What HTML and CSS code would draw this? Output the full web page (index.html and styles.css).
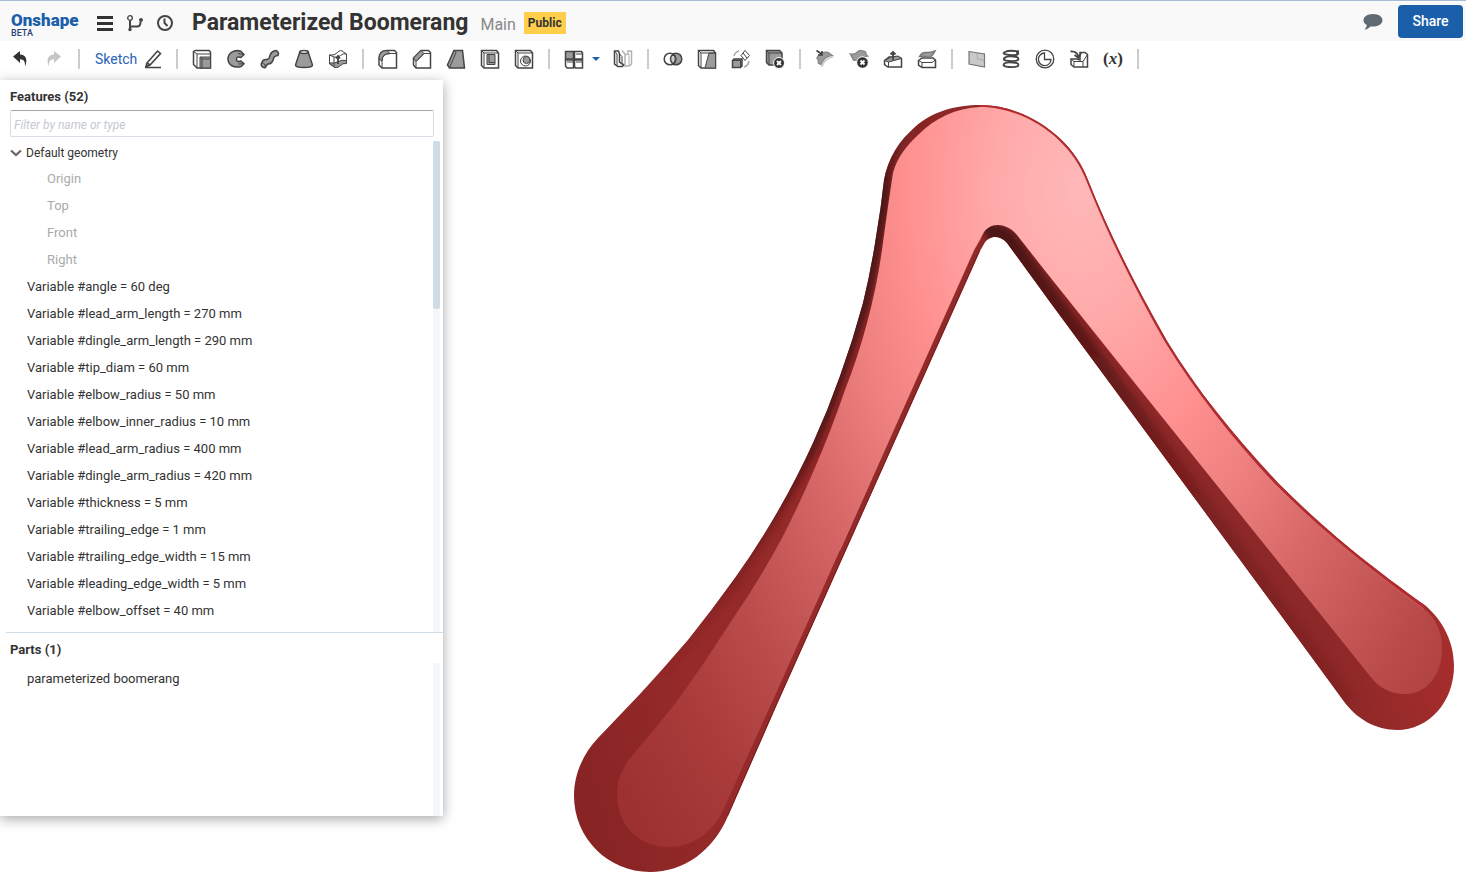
FILE: index.html
```
<!DOCTYPE html>
<html lang="en">
<head>
<meta charset="utf-8">
<title>Parameterized Boomerang</title>
<link rel="stylesheet" href="styles.css">
</head>
<body>
<header class="topbar">
  <a class="logo" href="#"><span class="logo-name">Onshape</span><span class="logo-tag">BETA</span></a>
  <nav class="top-nav">
    <button class="nav-btn" aria-label="Menu"><svg viewBox="0 0 20 20"><path d="M2 4.500h16M2 10.500h16M2 16.500h16" stroke="#333" stroke-width="3"/></svg></button>
    <button class="nav-btn" aria-label="Versions"><svg viewBox="0 0 20 20" class="ln"><circle cx="5" cy="5" r="2.300" stroke-width="1.300"/><path d="M5 7.500V18M5 13.500h7q3.500 0 3.500-4.500" stroke-width="2"/><circle cx="5" cy="16.500" r="1" stroke-width="1.500"/><circle cx="16" cy="7" r="1" stroke-width="2"/></svg></button>
    <button class="nav-btn" aria-label="History"><svg viewBox="0 0 20 20" class="ln"><circle cx="10" cy="10" r="7" stroke-width="2"/><path d="M9.500 5.500V10l3 3" stroke-width="2"/></svg></button>
  </nav>
  <div class="doc">
    <h1 class="doc-title">Parameterized Boomerang</h1>
    <span class="doc-branch">Main</span>
    <span class="badge">Public</span>
  </div>
  <button class="chat-btn" aria-label="Comments"><svg viewBox="0 0 20 20"><path d="M10 3c5.500 0 9.500 2.800 9.500 6.300s-4 6.300-9.500 6.300q-1.200 0-2.400-.2Q5 18 1.500 18.800q2.300-2.300 2.300-4.700Q.5 12.300.5 9.300C.5 5.800 4.500 3 10 3z" fill="#5f6a73"/></svg></button>
  <button class="share-btn">Share</button>
</header>

<div class="toolbar" role="toolbar">
  <button class="tool" aria-label="Undo"><svg viewBox="0 0 20 20"><path d="M3 7.500 10 2v3.500c6 .3 8 5 5 12 .2-5-1-7-5-7.200V14z" fill="#333"/></svg></button>
  <button class="tool" aria-label="Redo"><svg viewBox="0 0 20 20"><path d="M17 7.500 10 2v3.500c-6 .3-8 5-5 12-.2-5 1-7 5-7.200V14z" fill="#c6c6c6"/></svg></button>
  <span class="sep"></span>
  <button class="tool sketch">Sketch <svg viewBox="0 0 20 20" class="ln"><path d="M4 14 14.500 2l3 2.500L7 16l-4 1.500zM4 14l3 2M2 18.500h16" stroke-width="1.600"/></svg></button>
  <span class="sep"></span>
  <button class="tool" aria-label="Extrude"><svg viewBox="0 0 20 20" class="ln"><path d="M1.500 2.500 3 1.500h14l1.500 1.500v16H5L1.500 15.500z"/><path d="M1.500 2.500 5 5h13M5 5v14" class="th"/><path d="M8 8h10.500v11H8z" class="gr th"/><path d="M8 8l2 2h8.500M10 10v9" class="th"/></svg></button>
  <button class="tool" aria-label="Revolve"><svg viewBox="0 0 20 20" class="ln"><path d="M14.500 2C8 .5 2 4 2 10s6 9.500 13 7.500l3-2.800-3-2.700q-4.500 1.500-4.500-1.800t4.500-1.700l3-3z" class="gr"/><path d="m12 4.500 6 1M12.500 15l5.500-.3" class="th"/></svg></button>
  <button class="tool" aria-label="Sweep"><svg viewBox="0 0 20 20" class="ln"><path d="M2 13q1-3 5-2.500 2.500-.5 3-4Q11 2 16.500 1.500q3 2 1.500 5-4 .5-4.500 3-1 5.500-5.500 5.500-2 1-2.500 3.500-2 .5-3.500-1T2 13z" class="gr"/><path d="M2 14q3-.5 3.500 4.500" class="th"/></svg></button>
  <button class="tool" aria-label="Loft"><svg viewBox="0 0 20 20" class="ln"><path d="M6 2.500 1.500 16q0 2.500 8.500 2.500t8.500-2.500L14 2.500z" class="gr"/><ellipse cx="10" cy="3" rx="4" ry="1.500" class="wf"/></svg></button>
  <button class="tool" aria-label="Thicken"><svg viewBox="0 0 20 20" class="ln"><path d="M1.500 6q5 1 8-2.500t6-.5l3 2v8q-3-1-5 2t-7 3l-5-3z" class="th wf"/><path d="M1.500 14q6 .5 9-1.500t8-1v3q-4-.5-6 2t-6 2z" class="gr th"/><path d="M1.500 6 6 8q4 1 6.500-1.500T18.500 5M6 8v10" class="th"/><path d="M10 15V7M8 9.500 10 7l2 2.500" stroke-width="1.800"/></svg></button>
  <span class="sep"></span>
  <button class="tool" aria-label="Fillet"><svg viewBox="0 0 20 20" class="ln"><path d="M1 10Q1 1.500 9 1.500h7.500l2 2V19H4l-3-3z" class="wf"/><path d="M1 10Q1 1.500 9 1.500l3 3Q4 4.500 4 12z" class="gr th"/><path d="M4 19v-7q0-7.500 8-7.500h6" class="th"/></svg></button>
  <button class="tool" aria-label="Chamfer"><svg viewBox="0 0 20 20" class="ln"><path d="M1.500 9 9 1.500h7.500l2 2V19H4l-2.500-3z" class="wf"/><path d="M1.500 9 9 1.500l3 3-8 8z" class="gr th"/><path d="M4 19v-6.500l8-8h6" class="th"/></svg></button>
  <button class="tool" aria-label="Draft"><svg viewBox="0 0 20 20" class="ln"><path d="M8 1.500h8.500l2 17.500H3.500l-2-3z" class="gr"/><path d="m8 1.500 2 2L3.500 19" class="th"/></svg></button>
  <button class="tool" aria-label="Shell"><svg viewBox="0 0 20 20" class="ln"><path d="M1.500 1.500h15l2 2.500v15H4l-2.500-2.500z" class="wf"/><path d="M1.500 1.500 4 4v15M4 4h14" class="th"/><path d="M7 5.500v10h8v-10z" class="gr th"/><path d="M9 5.500v8h6" class="th"/></svg></button>
  <button class="tool" aria-label="Hole"><svg viewBox="0 0 20 20" class="ln"><path d="M1.500 1.500h15l2 2.500v15H4l-2.500-2.500z" class="wf"/><path d="M1.500 1.500 4 4v15M4 4h14" class="th"/><circle cx="11.500" cy="12" r="5" class="wf th"/><circle cx="12.500" cy="11" r="3.500" class="gr th"/></svg></button>
  <span class="sep"></span>
  <button class="tool" aria-label="Linear pattern"><svg viewBox="0 0 20 20" class="ln"><rect x="1.500" y="2.500" width="8" height="7.500" class="gr"/><path d="M10.500 2.500h7l1 1.500v6h-8zM1.500 11h8v8H3l-1.500-2zM10.500 11h8v8h-7l-1-1.500z" class="wf"/><path d="M3 13h6M12 13h6M12 5h6" class="th"/></svg></button>
  <button class="caret" aria-label="More patterns"><svg viewBox="0 0 8 4"><path d="M0 0h8L4 4z" fill="#1b5faa"/></svg></button>
  <button class="tool" aria-label="Mirror"><svg viewBox="0 0 20 20" class="ln"><g class="soft"><path d="M9 1.500 12 5v12l-3-3M12 6l3-1V2h3.500v13l-2 2H12"/><path d="M16 5v12" class="th"/></g><path d="M1.500 2h4l1 3v8l4 3-1 1.500H5L1.500 15z" class="wf"/><path d="M1.500 2 4 5v12M6.500 5 9 7.500V14" class="th"/></svg></button>
  <span class="sep"></span>
  <button class="tool" aria-label="Boolean"><svg viewBox="0 0 20 20" class="ln"><circle cx="13" cy="10" r="5.800" class="gr"/><circle cx="7" cy="10" r="5.800" class="wf"/><path d="M10 5q-2.500 2-2.500 5t2.500 5q2.500-2 2.500-5T10 5z" fill="#ccc"/></svg></button>
  <button class="tool" aria-label="Split"><svg viewBox="0 0 20 20" class="ln"><path d="M1.500 1.500h15l2 2.500v15H4l-2.500-2.500z" class="wf"/><path d="M12 4h6.500v15H8z" class="gr th"/><path d="M1.500 1.500 4 4v15M4 4h14" class="th"/></svg></button>
  <button class="tool" aria-label="Transform"><svg viewBox="0 0 20 20" class="ln"><path d="M1.500 11.500 3 10h8v7l-1.500 1.500h-8z" class="gr"/><path d="M1.500 11.500h8v7M9.500 11.500 11 10" class="th"/><path d="m14 1.500 4.500 5-4.500 5-4-5zM12 4l4 5" class="th wf"/><path d="M3 7q1-4 5-5M18 12q-1 5-5 6" stroke="#aaa"/></svg></button>
  <button class="tool" aria-label="Delete part"><svg viewBox="0 0 20 20" class="ln"><path d="M1.500 1.500h13L17 4v12H4l-2.500-2.500z" class="gr"/><path d="M1.500 1.500 4 4v12M4 4h13" class="th"/><circle cx="14" cy="14" r="5.500" fill="#333" stroke="#fff" stroke-width="1"/><path d="m12 12 4 4m0-4-4 4" stroke="#fff" stroke-width="1.800"/></svg></button>
  <span class="sep"></span>
  <button class="tool" aria-label="Modify fillet"><svg viewBox="0 0 20 20" class="ln"><path d="M2 9q4-6.500 11-5.500l4 3Q9 7 6 15.500L3.500 14Q4 11 2 9z" class="gr" stroke="#888"/><path d="M19 8.500Q11 9 7.500 18l-2-.5Q9 9 17 7z" fill="#ccc" stroke="none"/><path d="M1.500 1.500 6.500 5M7 2v4H3" stroke-width="1.700"/></svg></button>
  <button class="tool" aria-label="Delete face"><svg viewBox="0 0 20 20" class="ln"><path d="M1.500 5Q6 6 8.500 3t8 0q.5 3 2 4-5 1-7 3t-7 1z" class="gr" stroke="#888"/><circle cx="13.500" cy="13.500" r="5.800" fill="#333" stroke="#fff" stroke-width="1"/><path d="m11.500 11.500 4 4m0-4-4 4" stroke="#fff" stroke-width="1.800"/></svg></button>
  <button class="tool" aria-label="Move face"><svg viewBox="0 0 20 20" class="ln"><path d="M1.500 11.500 6 8h9.500l3 1.500V18H5l-3.500-2.500z" class="wf"/><path d="m1.500 11.500 4 1.500L18.500 9.500 15 7 8 8z" class="gr th"/><path d="M5.500 13v5" class="th"/><path d="M10 11V3M7.500 5.500 10 3l2.500 2.500" stroke-width="1.800"/></svg></button>
  <button class="tool" aria-label="Replace face"><svg viewBox="0 0 20 20" class="ln"><path d="M1.500 11.500 5 9h11l2.500 2v7.500H5l-3.500-2.500z" class="wf"/><path d="m1.500 11.500 3.500 2h10l3.500-2.500M5 13.500v5" class="th"/><path d="M2.500 7.500Q5 3 9 3.500T18 2q-2 4-4 5.500T8 7.500z" fill="#9b9b9b" stroke="#777"/></svg></button>
  <span class="sep"></span>
  <button class="tool" aria-label="Plane"><svg viewBox="0 0 20 20" class="ln"><path d="m2 2.500 15.500 2.500v13L2 15z" fill="#c9c9c9" stroke="#777" stroke-width="1.200"/><path d="m10 4 .5 6 7 1.500" stroke="#aaa" stroke-width="1"/></svg></button>
  <button class="tool" aria-label="Helix"><svg viewBox="0 0 20 20" class="ln"><path d="M18 2.500Q8 .8 4 3t4 3 9-1q1-1.500-2-1.500M16 8Q6 6.500 3.500 9T8 12t9-1q1-2-1-3M16 14Q5 12.500 3 15t5 3 9-1q1-2-1-3" stroke-width="1.900"/></svg></button>
  <button class="tool" aria-label="Section view"><svg viewBox="0 0 20 20" class="ln"><circle cx="10" cy="10" r="8.800" stroke-width="1.300"/><path d="M9.500 4v6.500H16A6.300 6.300 0 1 1 9.500 4z" stroke-width="1.300"/></svg></button>
  <button class="tool" aria-label="Import"><svg viewBox="0 0 20 20" class="ln"><path d="M2 10h6l3 1V3.500h5l2.500 2V18H5l-3-2.500z" class="wf"/><path d="m2 10 3 2.500h9l4.500-7M5 12.500V18M14 12.500V18" class="th"/><path d="M1.500 2.500Q8 2 9.500 8M5.500 6l4 3L12 4" stroke-width="1.800"/></svg></button>
  <button class="tool variable">(<i>x</i>)</button>
  <span class="sep"></span>
</div>

<main class="workspace">
  <svg class="canvas" viewBox="0 80 1466 803" role="img" aria-label="Boomerang model">
    <defs>
      <radialGradient id="face" gradientUnits="userSpaceOnUse" cx="0" cy="0" r="1" gradientTransform="translate(1080 190) scale(595 945)">
        <stop offset="0" stop-color="#ffb8b8"/><stop offset=".14" stop-color="#ffaaaa"/><stop offset=".29" stop-color="#ff9090"/><stop offset=".4" stop-color="#ee8080"/><stop offset=".53" stop-color="#d86868"/><stop offset=".62" stop-color="#c95a5a"/><stop offset=".72" stop-color="#ba4b4b"/><stop offset=".85" stop-color="#a93b3b"/><stop offset="1" stop-color="#9d3030"/>
      </radialGradient>
      <linearGradient id="side" gradientUnits="userSpaceOnUse" x1="600" y1="860" x2="1453" y2="620">
        <stop offset="0" stop-color="#882424"/><stop offset=".15" stop-color="#962a2a"/><stop offset=".85" stop-color="#8c2828"/><stop offset="1" stop-color="#a92d2d"/>
      </linearGradient>
      <linearGradient id="shadeLeft" gradientUnits="userSpaceOnUse" x1="0" y1="110" x2="0" y2="720">
        <stop offset="0" stop-color="#5a1717" stop-opacity="0"/><stop offset=".13" stop-color="#481313"/><stop offset=".5" stop-color="#501515"/><stop offset=".75" stop-color="#7a1e1e" stop-opacity=".8"/><stop offset="1" stop-color="#8a2424" stop-opacity="0"/>
      </linearGradient>
      <linearGradient id="shadeInner" gradientUnits="userSpaceOnUse" x1="1000" y1="235" x2="1340" y2="700">
        <stop offset="0" stop-color="#4c1414"/><stop offset=".2" stop-color="#5c1818"/><stop offset=".5" stop-color="#781f1f"/><stop offset="1" stop-color="#852424"/>
      </linearGradient>
      <filter id="soft" filterUnits="userSpaceOnUse" x="500" y="80" width="966" height="803"><feGaussianBlur stdDeviation="3"/></filter>
      <path id="outline" d="M598 738 L640 694 Q664 668 688 640 Q712 610 735 578 Q758 546 778 511 Q797 478 813 443 Q828 410 840 376 Q853 340 863 303 Q871 270 876 237 Q881 208 884 180 C888 158 899 141 915 127 C933 111 956 105 980 105 C1026 105 1073 138 1088 180 C1112 240 1138 290 1167 341 C1198 392 1236 438 1278 483 C1318 523 1360 559 1426 606 C1443 621 1454 642 1454 666 C1454 702 1429 730 1397 730 C1376 730 1356 719 1343 700 L1280 614 L1050 302 L1007 243 C1000 235 989 235 984 244 L980 251 L778 702 L728 816 C713 851 684 872 650 872 C608 872 574 838 574 796 C574 774 583 754 598 738 Z"/>
      <clipPath id="body"><use href="#outline"/></clipPath>
    </defs>
    <use href="#outline" fill="url(#side)"/>
    <g clip-path="url(#body)" fill="none">
      <path d="M660 672 Q712 610 735 578 Q797 478 813 443 Q840 376 863 303 Q881 220 884 180 Q892 145 915 127 Q940 106 980 105" stroke="url(#shadeLeft)" stroke-width="13" filter="url(#soft)"/>
      <path d="M987 237 Q998 230 1010 245 L1050 300 L1280 614 L1346 703" stroke="url(#shadeInner)" stroke-width="22" filter="url(#soft)"/>
      <path d="M980 251 L778 702 L728 816" stroke="#7c1e1e" stroke-width="2"/>
      <path d="M980 105 C1026 105 1073 138 1088 180 C1112 240 1138 290 1167 341 C1198 392 1236 438 1278 483 C1318 523 1360 559 1426 606" stroke="#b02c30" stroke-width="6"/>
    </g>
    <path d="M637 750 Q658 725 678 700 Q706 661 732 620 Q759 581 782 538 Q799 505 814 470 Q831 431 845 390 Q858 357 867 323 Q877 286 882 250 Q888 205 893 173 C897 158 906 146 918 135 C935 118 956 108 980 107 C1024 107 1070 138 1086 180 C1110 240 1136 291 1165 342 C1196 393 1234 440 1276 485 C1316 525 1358 561 1424 609 C1436 618 1442 632 1442 649 C1442 675 1427 694 1405 694 C1391 694 1379 688 1370 676 L1317 610 L1150 402 L1050 277 L1017 235 C1006 222 989 222 983 234 L974 250 L773 700 L724 808 C713 834 691 847 668 847 C639 847 617 825 617 794 C617 777 625 763 637 750 Z" fill="url(#face)"/>
    <path d="M981 238 L974 250 L840 550" fill="none" stroke="#ffa9a9" stroke-opacity=".35" stroke-width="1"/>
    <path d="M1276 485 C1316 525 1358 561 1424 609" fill="none" stroke="#f07c7c" stroke-opacity=".5" stroke-width="1"/>
  </svg>

  <aside class="panel">
    <section class="features">
      <h2 class="panel-title"><label for="filter">Features (52)</label></h2>
      <input id="filter" class="filter" type="text" placeholder="Filter by name or type">
      <div class="scroller">
        <ul class="list">
          <li class="group"><svg class="chevron" viewBox="0 0 12 8"><path d="m1 1.500 5 4.500 5-4.500" fill="none" stroke="#666" stroke-width="2.200"/></svg>Default geometry</li>
          <li class="datum">Origin</li>
          <li class="datum">Top</li>
          <li class="datum">Front</li>
          <li class="datum">Right</li>
          <li>Variable #angle = 60 deg</li>
          <li>Variable #lead_arm_length = 270 mm</li>
          <li>Variable #dingle_arm_length = 290 mm</li>
          <li>Variable #tip_diam = 60 mm</li>
          <li>Variable #elbow_radius = 50 mm</li>
          <li>Variable #elbow_inner_radius = 10 mm</li>
          <li>Variable #lead_arm_radius = 400 mm</li>
          <li>Variable #dingle_arm_radius = 420 mm</li>
          <li>Variable #thickness = 5 mm</li>
          <li>Variable #trailing_edge = 1 mm</li>
          <li>Variable #trailing_edge_width = 15 mm</li>
          <li>Variable #leading_edge_width = 5 mm</li>
          <li>Variable #elbow_offset = 40 mm</li>
        </ul>
        <div class="track"><div class="thumb"></div></div>
      </div>
    </section>
    <section class="parts">
      <h2 class="panel-title">Parts (1)</h2>
      <div class="scroller">
        <ul class="list"><li>parameterized boomerang</li></ul>
        <div class="track"></div>
      </div>
    </section>
  </aside>
</main>
</body>
</html>
```

FILE: styles.css
```
* { box-sizing: border-box; }

body {
  margin: 0;
  height: 100vh;
  display: flex;
  flex-direction: column;
  overflow: hidden;
  background: #fff;
  color: #333;
  font: 13px/18px Roboto, "Liberation Sans", sans-serif;
}

button {
  margin: 0;
  padding: 0;
  border: 0;
  background: none;
  color: inherit;
  font: inherit;
  cursor: pointer;
}

svg { display: block; }

/* Header */
.topbar {
  flex: none;
  display: flex;
  align-items: center;
  height: 41px;
  padding: 0 3px 0 11px;
  border-top: 1px solid #a6bbd4;
  background: #f9f9f9;
}

.logo {
  display: flex;
  flex-direction: column;
  width: 79px;
  padding-top: 5px;
  color: #1b5faa;
  text-decoration: none;
}
.logo-name { font-size: 17px; line-height: 18px; font-weight: 900; }
.logo-tag { font-size: 9px; line-height: 8px; font-weight: 500; color: #2d3f77; }

.top-nav { display: flex; padding-top: 4px; }
.nav-btn { width: 30px; display: grid; place-items: center; }
.nav-btn svg, .tool svg, .chat-btn svg { width: 20px; height: 20px; }

.doc {
  flex: 1;
  display: flex;
  align-items: baseline;
  padding: 3px 0 0 12px;
  white-space: nowrap;
}
.doc-title { margin: 0; font-size: 23px; line-height: 28px; font-weight: 700; }
.doc-branch { margin-left: 12px; font-size: 16px; color: #888; }
.badge {
  margin-left: 8px;
  padding: 0 4px;
  align-self: flex-start;
  margin-top: 3px;
  background: #ffcf4b;
  font-size: 12px;
  line-height: 22px;
  font-weight: 700;
}

.chat-btn { margin-right: 15px; }
.share-btn {
  width: 65px;
  height: 33px;
  border-radius: 4px;
  background: #1b5faa;
  color: #fff;
  font-size: 14px;
  font-weight: 500;
}

/* Toolbar */
.toolbar {
  flex: none;
  display: flex;
  align-items: center;
  height: 39px;
  padding: 0 3px 3px;
}
.tool { width: 34px; height: 30px; display: grid; place-items: center; }
.sketch {
  width: 82px;
  display: flex;
  align-items: center;
  justify-content: space-between;
  padding: 0 6px 0 8px;
  font-size: 14px;
  line-height: 18px;
  color: #2a62b5;
}
.caret { width: 15px; padding-left: 1px; }
.caret svg { width: 8px; height: 4px; }
.variable { font: bold 17px/20px "Liberation Serif", serif; display: block; }
.sep { flex: none; width: 16px; height: 20px; display: flex; justify-content: center; }
.sep::before { content: ""; width: 2px; background: #ccc; }

.ln { fill: none; stroke: #444; stroke-width: 1.500; }
.ln .th { stroke-width: 1; }
.ln .gr { fill: #9b9b9b; }
.ln .wf { fill: #fff; }
.ln .soft { opacity: .4; }

/* Model view with the feature panel laid over it */
.workspace { flex: 1; min-height: 0; display: grid; grid-template: minmax(0, 1fr) / minmax(0, 1fr); }
.canvas { grid-area: 1 / 1; width: 100%; height: 100%; }
.panel {
  grid-area: 1 / 1;
  z-index: 1;
  width: 443px;
  margin-bottom: 67px;
  display: flex;
  flex-direction: column;
  background: #fff;
  box-shadow: 0 3px 12px rgba(0, 0, 0, .35);
}
.features {
  flex: 1;
  min-height: 0;
  display: flex;
  flex-direction: column;
  padding-top: 8px;
}
.parts {
  flex: none;
  height: 184px;
  display: flex;
  flex-direction: column;
  margin-left: 6px;
  padding-top: 8px;
  border-top: 1px solid #cddce6;
}
.panel-title { margin: 0 10px 4px; font-size: 13px; line-height: 18px; font-weight: 700; }
.parts .panel-title { margin-left: 4px; }
.parts .list { padding-top: 2px; }
.parts .list li { padding-left: 21px; }

.filter {
  flex: none;
  height: 27px;
  margin: 0 9px 4px 10px;
  padding: 2px 3px 0;
  border: 1px solid #d9dde8;
  border-top-color: #a5a7b0;
  border-radius: 2px;
  font: 12px/18px Roboto, "Liberation Sans", sans-serif;
  color: #333;
}
.filter::placeholder { color: #c5cacf; font-style: italic; }

.scroller { flex: 1; min-height: 0; display: flex; }
.list { flex: 1; margin: 0; padding: 0; list-style: none; overflow: hidden; }
.list li { height: 27px; padding-left: 27px; line-height: 27px; white-space: nowrap; }
.list .datum { padding-left: 47px; color: #aaa; }
.list .group {
  height: 24px;
  padding-left: 10px;
  font-size: 12px;
  line-height: 24px;
  display: flex;
  align-items: center;
  gap: 4px;
}
.chevron { width: 12px; height: 8px; }
.track { width: 7px; margin-right: 3px; background: #f3f7fa; }
.thumb { height: 168px; border-radius: 2px; background: #cfdce6; }
```
